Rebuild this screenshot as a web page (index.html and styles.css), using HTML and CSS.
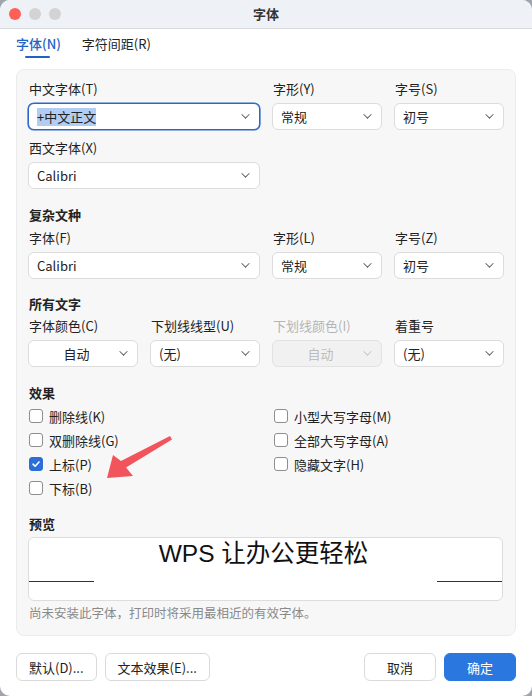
FILE: index.html
```html
<!DOCTYPE html>
<html lang="zh-CN">
<head>
  <meta charset="UTF-8" />
  <title>字体</title>
  <link rel="stylesheet" href="styles.css">
</head>
<body>
  <div class="window">
    <div class="titlebar">
      <div class="lights">
        <span class="light red"></span>
        <span class="light"></span>
        <span class="light"></span>
      </div>
      <div class="title">字体</div>
    </div>

    <div class="tabs">
      <div class="tab active">字体(N)</div>
      <div class="tab">字符间距(R)</div>
    </div>

    <div class="panel">
      <div class="grid">
        <div class="field span2">
          <div class="label">中文字体(T)</div>
          <div class="select focus"><span class="sel-text">+中文正文</span><i class="chev"></i></div>
        </div>
        <div class="field">
          <div class="label">字形(Y)</div>
          <div class="select"><span>常规</span><i class="chev"></i></div>
        </div>
        <div class="field">
          <div class="label">字号(S)</div>
          <div class="select"><span>初号</span><i class="chev"></i></div>
        </div>
        <div class="field span2 row2">
          <div class="label">西文字体(X)</div>
          <div class="select"><span>Calibri</span><i class="chev"></i></div>
        </div>
      </div>

      <div class="section">复杂文种</div>
      <div class="grid">
        <div class="field span2">
          <div class="label">字体(F)</div>
          <div class="select"><span>Calibri</span><i class="chev"></i></div>
        </div>
        <div class="field">
          <div class="label">字形(L)</div>
          <div class="select"><span>常规</span><i class="chev"></i></div>
        </div>
        <div class="field">
          <div class="label">字号(Z)</div>
          <div class="select"><span>初号</span><i class="chev"></i></div>
        </div>
      </div>

      <div class="section tight">所有文字</div>
      <div class="grid">
        <div class="field">
          <div class="label">字体颜色(C)</div>
          <div class="select center"><span>自动</span><i class="chev"></i></div>
        </div>
        <div class="field">
          <div class="label">下划线线型(U)</div>
          <div class="select"><span>(无)</span><i class="chev"></i></div>
        </div>
        <div class="field">
          <div class="label disabled">下划线颜色(I)</div>
          <div class="select center disabled"><span>自动</span><i class="chev"></i></div>
        </div>
        <div class="field">
          <div class="label">着重号</div>
          <div class="select"><span>(无)</span><i class="chev"></i></div>
        </div>
      </div>

      <div class="section">效果</div>
      <div class="checks">
        <label class="check"><span class="box"></span>删除线(K)</label>
        <label class="check"><span class="box"></span>小型大写字母(M)</label>
        <label class="check"><span class="box"></span>双删除线(G)</label>
        <label class="check"><span class="box"></span>全部大写字母(A)</label>
        <label class="check"><span class="box checked"><svg viewBox="0 0 14 14"><path d="M3.5 7.2 L6 9.6 L10.5 4.6" /></svg></span>上标(P)</label>
        <label class="check"><span class="box"></span>隐藏文字(H)</label>
        <label class="check"><span class="box"></span>下标(B)</label>
      </div>

      <div class="section preview-title">预览</div>
      <div class="preview">
        <span class="rule"></span>
        <div class="sample">WPS 让办公更轻松</div>
        <span class="rule"></span>
      </div>
      <div class="hint">尚未安装此字体，打印时将采用最相近的有效字体。</div>
    </div>

    <div class="footer">
      <div class="btns">
        <button class="btn">默认(D)...</button>
        <button class="btn">文本效果(E)...</button>
      </div>
      <div class="btns">
        <button class="btn wide">取消</button>
        <button class="btn wide primary">确定</button>
      </div>
    </div>

    <!-- annotation arrow -->
    <svg class="arrow" width="532" height="696" viewBox="0 0 532 696">
      <polygon points="107,478 113,455 121,461 170,436 172,439.5 126,467.5 133,476" />
    </svg>
  </div>
</body>
</html>
```

FILE: styles.css
```css
* { box-sizing: border-box; margin: 0; padding: 0; }

body {
  width: 532px;
  height: 696px;
  background: #9fa4ad;
  font-family: "Noto Sans CJK SC", "Liberation Sans", sans-serif;
  font-size: 13px;
  color: #222;
  overflow: hidden;
}

.window {
  position: relative;
  width: 532px;
  height: 696px;
  background: #fff;
  border-radius: 10px;
  overflow: hidden;
}

/* title bar */
.titlebar {
  height: 29px;
  background: #eef1f6;
  border-bottom: 1px solid #d6d9df;
  display: flex;
  align-items: center;
  position: relative;
}

.lights {
  display: flex;
  gap: 8px;
  padding-left: 9px;
}

.light {
  width: 12px;
  height: 12px;
  border-radius: 50%;
  background: #d3d3d6;
}

.light.red { background: #fe5f57; }

.title {
  position: absolute;
  left: 0; right: 0;
  text-align: center;
  font-weight: 600;
  color: #333;
  line-height: 28px;
}

/* tabs */
.tabs {
  display: flex;
  gap: 21px;
  padding: 6px 0 0 16px;
  height: 40px;
}

.tab {
  line-height: 18px;
  color: #222;
  position: relative;
}

.tab.active {
  color: #2262c6;
  font-weight: 500;
}

.tab.active::after {
  content: "";
  position: absolute;
  left: 9px;
  width: 25px;
  top: 21px;
  height: 2px;
  border-radius: 1px;
  background: #2262c6;
}

/* main panel */
.panel {
  margin: 0 16px;
  background: #f7f7f7;
  border: 1px solid #ebebeb;
  border-radius: 8px;
  padding: 10px 12px 12px 11px;
  height: 567px;
}

.grid {
  display: grid;
  grid-template-columns: repeat(4, 110px);
  column-gap: 12px;
}

.span2 { grid-column: span 2; }
.row2 { margin-top: 9px; }

.label {
  line-height: 18px;
  margin-bottom: 5px;
  padding-left: 1px;
}

.label.disabled { color: #b5b5b5; }

.select {
  height: 27px;
  background: #fff;
  border: 1px solid #dcdcdc;
  border-radius: 6px;
  display: flex;
  align-items: center;
  padding: 0 10px 0 8px;
  position: relative;
}

.select span { flex: 1; line-height: 18px; }

.select.center span { text-align: center; padding-right: 4px; }

.select.focus {
  border-color: #2c66c8;
  box-shadow: 0 0 0 0.6px #2c66c8;
}

.select .sel-text {
  flex: 0 0 auto;
  background: #b2cdf3;
  margin-right: auto;
}

.chev {
  width: 7px;
  height: 7px;
  border-right: 1.2px solid #555;
  border-bottom: 1.2px solid #555;
  transform: rotate(45deg) scale(0.85, 0.85);
  margin-top: -4px;
}

.select.disabled {
  background: #f1f1f1;
  border-color: #e2e2e2;
  color: #bdbdbd;
}

.select.disabled .chev { border-color: #c4c4c4; }

.section {
  font-weight: 700;
  line-height: 18px;
  margin: 17px 0 5px;
  padding-left: 1px;
}

.section.tight { margin: 16px 0 4px; }
.section.preview-title { margin: 15px 0 4px; }

/* checkboxes */
.checks {
  display: grid;
  grid-template-columns: 245px 1fr;
  margin-top: -3px;
}

.check {
  display: flex;
  align-items: center;
  gap: 6px;
  height: 24px;
  padding-left: 1px;
}

.box {
  width: 14px;
  height: 14px;
  border: 1px solid #8d8d8d;
  border-radius: 3px;
  background: #fff;
  display: flex;
}

.box.checked {
  background: #2b6fd6;
  border-color: #2b6fd6;
}

.box svg {
  width: 12px;
  height: 12px;
  fill: none;
  stroke: #fff;
  stroke-width: 1.8;
  stroke-linecap: round;
  stroke-linejoin: round;
}

/* preview */
.preview {
  height: 64px;
  background: #fff;
  border: 1px solid #dddddd;
  border-radius: 6px;
  display: flex;
  align-items: flex-start;
  overflow: hidden;
}

.preview .rule {
  flex: 0 0 65px;
  height: 1px;
  background: #333;
  margin-top: 43px;
}

.sample {
  flex: 1;
  text-align: center;
  font-family: "Liberation Sans", "Noto Sans CJK SC", sans-serif;
  font-size: 24.5px;
  line-height: 30px;
  margin-top: 1px;
  padding-right: 4px;
  color: #111;
}

.hint {
  margin-top: 3px;
  line-height: 18px;
  font-size: 12.5px;
  color: #8a8a8a;
  padding-left: 1px;
}

/* bottom buttons */
.footer {
  display: flex;
  justify-content: space-between;
  padding: 17px 16px 0;
}

.btns { display: flex; gap: 8px; }

.btn {
  height: 28px;
  padding: 0 12px;
  background: #fff;
  border: 1px solid #dadada;
  border-radius: 6px;
  font-family: inherit;
  font-size: 13px;
  color: #222;
}

.btn.wide { width: 72px; }

.btn.primary {
  background: #2a78df;
  border-color: #2a78df;
  color: #fff;
}

.arrow {
  position: absolute;
  left: 0; top: 0;
  pointer-events: none;
}

.arrow polygon { fill: #f2545b; }
```
